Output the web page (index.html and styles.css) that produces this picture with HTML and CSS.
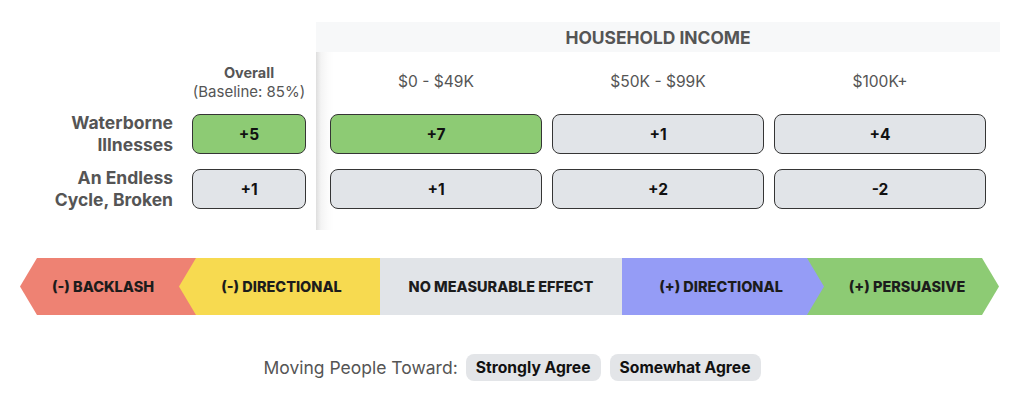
FILE: index.html
```html
<!DOCTYPE html>
<html>
<head>
<meta charset="utf-8">
<link rel="stylesheet" href="styles.css">
</head>
<body>
<div class="page">
  <div class="matrix">
    <div class="left">
      <div class="left-head">
        <div class="label-spacer"></div>
        <div class="overall-head">
          <div class="overall-title">Overall</div>
          <div class="overall-sub">(Baseline: 85%)</div>
        </div>
      </div>
      <div class="rows">
        <div class="row">
          <div class="row-label">Waterborne<br>Illnesses</div>
          <div class="cell overall green">+5</div>
        </div>
        <div class="row">
          <div class="row-label">An Endless<br>Cycle, Broken</div>
          <div class="cell overall gray">+1</div>
        </div>
      </div>
    </div>
    <div class="panel">
      <div class="band">HOUSEHOLD INCOME</div>
      <div class="panel-body">
        <div class="col-heads">
          <div class="col-head">$0 - $49K</div>
          <div class="col-head">$50K - $99K</div>
          <div class="col-head">$100K+</div>
        </div>
        <div class="rows">
          <div class="row">
            <div class="cell wide green">+7</div>
            <div class="cell wide gray">+1</div>
            <div class="cell wide gray">+4</div>
          </div>
          <div class="row">
            <div class="cell wide gray">+1</div>
            <div class="cell wide gray">+2</div>
            <div class="cell wide gray">-2</div>
          </div>
        </div>
      </div>
    </div>
  </div>

  <div class="legend">
    <div class="seg seg-red">(-) BACKLASH</div>
    <div class="seg seg-yellow">(-) DIRECTIONAL</div>
    <div class="seg seg-gray">NO MEASURABLE EFFECT</div>
    <div class="seg seg-blue">(+) DIRECTIONAL</div>
    <div class="seg seg-green">(+) PERSUASIVE</div>
  </div>

  <div class="footer">
    <span class="footer-text">Moving People Toward:</span>
    <span class="pill">Strongly Agree</span>
    <span class="pill">Somewhat Agree</span>
  </div>
</div>
</body>
</html>
```

FILE: styles.css
```css
* { box-sizing: border-box; }
html, body { margin: 0; padding: 0; background: #fff; }
body {
  font-family: Inter, "Noto Sans", "Liberation Sans", sans-serif;
  color: #555;
}
.page {
  width: 1024px;
  height: 401px;
  padding-top: 22px;
}
.matrix {
  display: flex;
}
.left {
  padding-top: 30px;
  margin-right: 10px;
}
.left-head {
  height: 62px;
  display: flex;
  align-items: center;
  gap: 19px;
  padding-bottom: 3px;
}
.label-spacer { width: 173px; }
.overall-head {
  width: 114px;
  text-align: center;
  line-height: 19px;
  font-size: 15px;
  color: #555;
  white-space: nowrap;
}
.overall-title { font-weight: 700; font-size: 14.5px; }
.rows {
  display: flex;
  flex-direction: column;
  gap: 15px;
}
.row {
  display: flex;
  align-items: center;
  gap: 19px;
  height: 40px;
}
.panel .row { gap: 10px; }
.row-label {
  width: 173px;
  text-align: right;
  font-weight: 700;
  font-size: 17.5px;
  line-height: 22px;
  color: #555;
}
.cell {
  height: 40px;
  border: 1.5px solid #353535;
  border-radius: 8px;
  display: flex;
  align-items: center;
  justify-content: center;
  font-weight: 700;
  font-size: 15.5px;
  color: #111;
}
.cell.overall { width: 114px; }
.cell.wide { width: 212px; }
.green { background: #8dcb74; }
.gray { background: #e1e4e8; }

.panel {
  width: 684px;
}
.band {
  height: 30px;
  background: #f7f8f9;
  display: flex;
  align-items: center;
  justify-content: center;
  font-weight: 700;
  font-size: 17.4px;
  color: #555;
}
.panel-body {
  padding: 0 14px 21px 14px;
  background: linear-gradient(to right, #dedede 0, #f4f4f4 5px, #fcfcfc 12px, #fff 18px);
}
.col-heads {
  height: 62px;
  display: flex;
  align-items: center;
  gap: 10px;
  padding-bottom: 3px;
}
.col-head {
  width: 212px;
  text-align: center;
  font-size: 15.6px;
  color: #555;
}

.legend {
  display: flex;
  margin: 28px 0 0 20px;
  width: 979px;
  height: 57px;
}
.seg {
  height: 57px;
  display: flex;
  align-items: center;
  justify-content: center;
  font-weight: 800;
  font-size: 14.5px;
  color: #1c1c1c;
  white-space: nowrap;
}
.seg-red {
  width: 176px;
  background: #ee8273;
  clip-path: polygon(17px 0, 100% 0, 100% 100%, 17px 100%, 0 50%);
  padding-right: 10px;
}
.seg-yellow {
  width: 201px;
  margin-left: -17px;
  background: #f7da50;
  clip-path: polygon(17px 0, 100% 0, 100% 100%, 17px 100%, 0 50%);
  padding-left: 4px;
  z-index: 1;
}
.seg-gray {
  width: 242px;
  background: #e1e4e8;
}
.seg-blue {
  width: 202px;
  margin-right: -17px;
  background: #959cf6;
  clip-path: polygon(0 0, calc(100% - 17px) 0, 100% 50%, calc(100% - 17px) 100%, 0 100%);
  padding-right: 4px;
  z-index: 1;
}
.seg-green {
  width: 192px;
  background: #8dcb74;
  clip-path: polygon(0 0, calc(100% - 17px) 0, 100% 50%, calc(100% - 17px) 100%, 0 100%);
  padding-left: 14px;
  padding-right: 6px;
}

.footer {
  margin-top: 39px;
  display: flex;
  justify-content: center;
  align-items: center;
  gap: 9px;
}
.footer-text {
  font-size: 17.5px;
  color: #555;
  margin-right: -1px;
}
.pill {
  height: 27px;
  padding: 0 10px;
  border-radius: 8px;
  background: #e3e5e8;
  display: flex;
  align-items: center;
  font-weight: 700;
  font-size: 15.7px;
  color: #111;
}
```
